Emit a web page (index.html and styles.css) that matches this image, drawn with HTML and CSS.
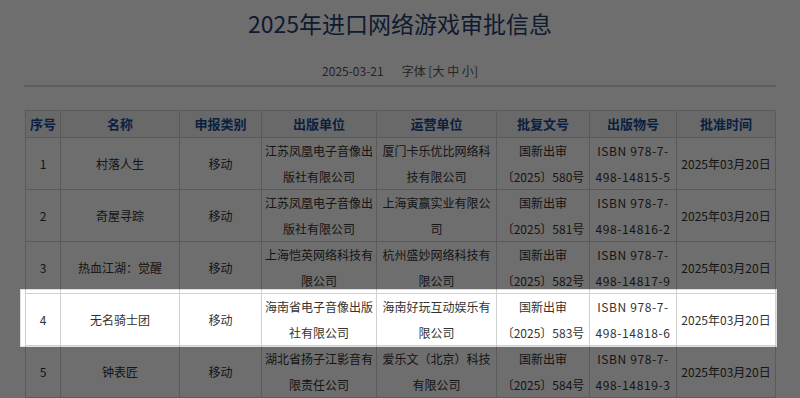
FILE: index.html
```html
<!DOCTYPE html>
<html lang="zh-CN">
<head>
<meta charset="utf-8">
<title>2025年进口网络游戏审批信息</title>
<link rel="stylesheet" href="styles.css">
</head>
<body>
<div class="page">
  <h1 class="title">2025年进口网络游戏审批信息</h1>
  <div class="meta"><span class="date">2025-03-21</span><span class="fontsize">字体 [<span class="fs">大</span> <span class="fs">中</span> <span class="fs">小</span>]</span></div>
  <div class="rule"></div>
  <div class="table-wrap">
    <table class="grid">
      <colgroup>
        <col class="c1"><col class="c2"><col class="c3"><col class="c4"><col class="c5"><col class="c6"><col class="c7"><col class="c8">
      </colgroup>
      <thead>
        <tr><th>序号</th><th>名称</th><th>申报类别</th><th>出版单位</th><th>运营单位</th><th>批复文号</th><th>出版物号</th><th>批准时间</th></tr>
      </thead>
      <tbody>
        <tr><td>1</td><td>村落人生</td><td>移动</td><td>江苏凤凰电子音像出版社有限公司</td><td>厦门卡乐优比网络科技有限公司</td><td>国新出审<br>〔2025〕580号</td><td class="isbn">ISBN 978-7-<br>498-14815-5</td><td>2025年03月20日</td></tr>
        <tr><td>2</td><td>奇屋寻踪</td><td>移动</td><td>江苏凤凰电子音像出版社有限公司</td><td>上海寅赢实业有限公司</td><td>国新出审<br>〔2025〕581号</td><td class="isbn">ISBN 978-7-<br>498-14816-2</td><td>2025年03月20日</td></tr>
        <tr><td>3</td><td>热血江湖：觉醒</td><td>移动</td><td>上海恺英网络科技有限公司</td><td>杭州盛妙网络科技有限公司</td><td>国新出审<br>〔2025〕582号</td><td class="isbn">ISBN 978-7-<br>498-14817-9</td><td>2025年03月20日</td></tr>
        <tr><td>4</td><td>无名骑士团</td><td>移动</td><td>海南省电子音像出版社有限公司</td><td>海南好玩互动娱乐有限公司</td><td>国新出审<br>〔2025〕583号</td><td class="isbn">ISBN 978-7-<br>498-14818-6</td><td>2025年03月20日</td></tr>
        <tr><td>5</td><td>钟表匠</td><td>移动</td><td>湖北省扬子江影音有限责任公司</td><td>爱乐文（北京）科技有限公司</td><td>国新出审<br>〔2025〕584号</td><td class="isbn">ISBN 978-7-<br>498-14819-3</td><td>2025年03月20日</td></tr>
      </tbody>
    </table>
    <div class="spotlight"></div>
  </div>
</div>
</body>
</html>
```

FILE: styles.css
```css
html, body {
  margin: 0;
  padding: 0;
  background: #ffffff;
  overflow: hidden;
}
body {
  font-family: "Noto Sans CJK SC", "Noto Sans", sans-serif;
  color: #333333;
}
.page {
  padding: 0 24px;
}
.title {
  margin: 0;
  padding-top: 7px;
  font-size: 23px;
  line-height: 32px;
  font-weight: normal;
  text-align: center;
  color: #263f70;
}
.meta {
  margin-top: 23px;
  text-align: center;
  font-size: 12px;
  line-height: 18px;
  color: #555555;
}
.date {
  margin-right: 18px;
}
.rule {
  margin-top: 5px;
  height: 2px;
  background: #d6d6d6;
}
.table-wrap {
  position: relative;
  margin: 23px 1px 0;
}
.grid {
  width: 750px;
  border-collapse: collapse;
  table-layout: fixed;
  font-size: 12px;
}
.c1 { width: 35px; }
.c2 { width: 119px; }
.c3 { width: 82px; }
.c4 { width: 115px; }
.c5 { width: 120px; }
.c6 { width: 93px; }
.c7 { width: 87px; }
.c8 { width: 99px; }
.grid th,
.grid td {
  border: 1px solid #d0d0d0;
  text-align: center;
  vertical-align: middle;
  padding: 0 3px;
}
.grid th {
  height: 26px;
  background: #f3f3f3;
  color: #174a96;
  font-size: 13px;
  font-weight: bold;
  line-height: 26px;
}
.grid td {
  line-height: 25.5px;
  color: #333333;
}
.grid .isbn {
  letter-spacing: 0.6px;
  padding: 0;
}
.spotlight {
  position: absolute;
  left: -5px;
  right: -2px;
  top: 179px;
  height: 58px;
  border: 1px solid rgba(0, 0, 0, 0.12);
  box-sizing: border-box;
  box-shadow: 0 0 0 3000px rgba(0, 0, 0, 0.57);
  pointer-events: none;
}
```
